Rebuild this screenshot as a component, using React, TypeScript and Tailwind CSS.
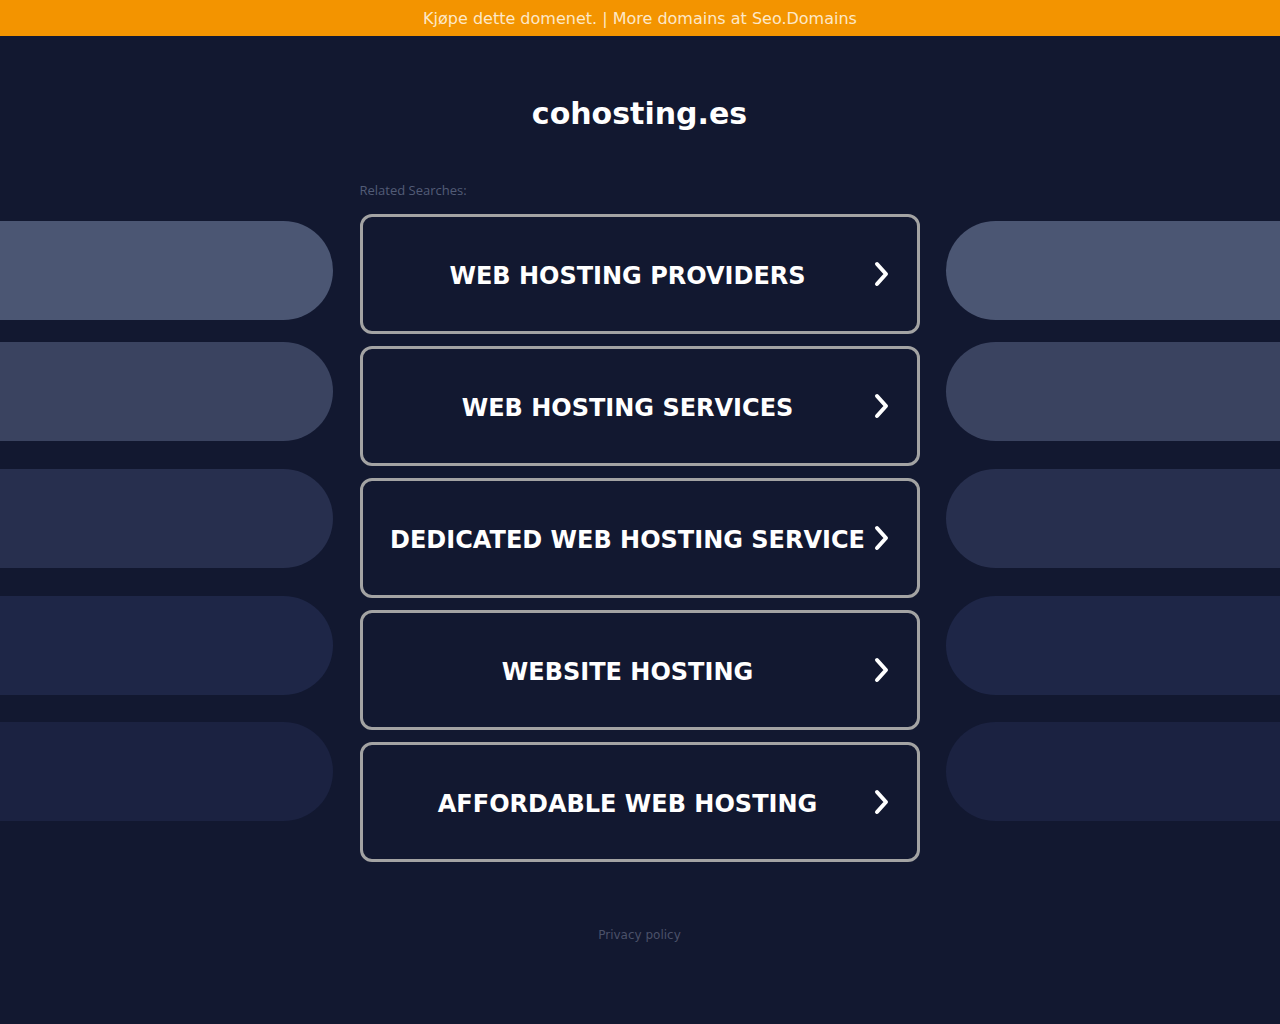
import React from "react";

const searches = [
  "WEB HOSTING PROVIDERS",
  "WEB HOSTING SERVICES",
  "DEDICATED WEB HOSTING SERVICE",
  "WEBSITE HOSTING",
  "AFFORDABLE WEB HOSTING",
];

const leftPills = [
  "bg-[#4b5673] mt-[185px]",
  "bg-[#3a4360] mt-[22px]",
  "bg-[#272f4e] mt-[28px]",
  "bg-[#1e2647] mt-[28px]",
  "bg-[#1b2241] mt-[27px]",
];

const rightPills = [
  "bg-[#4b5673] mt-[185px]",
  "bg-[#3a4360] mt-[22px]",
  "bg-[#272f4e] mt-[28px]",
  "bg-[#1e2647] mt-[28px]",
  "bg-[#1b2241] mt-[27px]",
];

function Chevron() {
  return (
    <svg width="20" height="30" viewBox="0 0 20 30" fill="none">
      <path
        d="M5 5 L14 15 L5 25"
        stroke="#ffffff"
        strokeWidth="4"
        strokeLinecap="round"
        strokeLinejoin="round"
      />
    </svg>
  );
}

export default function App() {
  return (
    <div className="min-h-screen bg-[#121830] font-['DejaVu_Sans',sans-serif]">
      <div className="h-9 bg-[#f39400] flex items-center justify-center text-[16px] text-[#fde8c8] pt-[1px]">
        Kjøpe dette domenet. | More domains at Seo.Domains
      </div>

      <div className="grid grid-cols-[333px_1fr_334px]">
        <div className="flex flex-col">
          {leftPills.map((c, i) => (
            <div key={i} className={`h-[99px] rounded-r-full ${c}`} />
          ))}
        </div>

        <div className="flex flex-col items-center">
          <h1 className="mt-[58px] text-[30px] font-bold text-white leading-[40px]">
            cohosting.es
          </h1>
          <div className="w-[560px] mt-[49px]">
            <div className="text-[13px] text-[#525c77] font-['Open_Sans',sans-serif] leading-[14px]">
              Related Searches:
            </div>
            <div className="mt-[17px] flex flex-col gap-3">
              {searches.map((s) => (
                <div
                  key={s}
                  className="h-[120px] border-[3px] border-[#a3a3a3] rounded-[12px] flex items-center justify-center relative"
                >
                  <span className="text-[24px] font-bold text-white pr-[24px] pt-[3px]">
                    {s}
                  </span>
                  <span className="absolute right-[25px] top-1/2 -translate-y-1/2 flex">
                    <Chevron />
                  </span>
                </div>
              ))}
            </div>
          </div>
          <div className="mt-[64px] text-[12px] text-[#4b5169]">Privacy policy</div>
        </div>

        <div className="flex flex-col">
          {rightPills.map((c, i) => (
            <div key={i} className={`h-[99px] rounded-l-full ${c}`} />
          ))}
        </div>
      </div>
    </div>
  );
}
